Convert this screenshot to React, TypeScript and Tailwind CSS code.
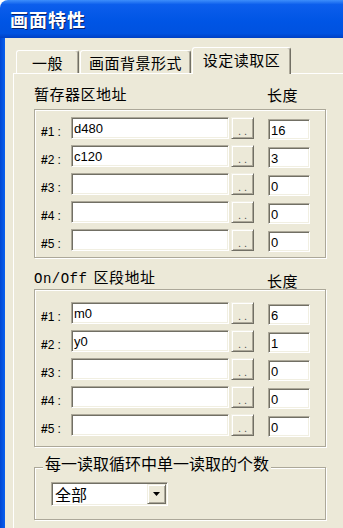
import React from "react";

const cjk = "font-['Noto_Sans_CJK_SC','Noto_Sans',sans-serif]";
const latin = "font-['Liberation_Sans','Noto_Sans_CJK_SC',sans-serif]";

const sunken =
  "border border-t-[#ACA899] border-l-[#ACA899] border-b-white border-r-white bg-white shadow-[inset_1px_1px_0_#716F64,inset_-1px_-1px_0_#F1EFE2]";
const raised =
  "border border-t-[#F1EFE2] border-l-[#F1EFE2] border-b-[#716F64] border-r-[#716F64] bg-[#ECE9D8] shadow-[inset_1px_1px_0_#fff,inset_-1px_-1px_0_#ACA899]";
const etched = "border border-[#ACA899] shadow-[inset_1px_1px_0_#fff,1px_1px_0_#fff]";

interface RowData {
  addr: string;
  len: string;
}

const registerRows: RowData[] = [
  { addr: "d480", len: "16" },
  { addr: "c120", len: "3" },
  { addr: "", len: "0" },
  { addr: "", len: "0" },
  { addr: "", len: "0" },
];

const bitRows: RowData[] = [
  { addr: "m0", len: "6" },
  { addr: "y0", len: "1" },
  { addr: "", len: "0" },
  { addr: "", len: "0" },
  { addr: "", len: "0" },
];

const AddressRow: React.FC<{ index: number; row: RowData }> = ({ index, row }) => (
  <div className="flex h-[22px] items-start">
    <span className={`${latin} w-[30px] self-end text-[12px] leading-[14px] text-black`}>
      <span className="font-bold">#</span>
      {index}
      <span className="ml-[3px]">:</span>
    </span>
    <div className={`${sunken} ${latin} flex h-[22px] w-[158px] items-center pl-[2px] text-[13px] leading-none text-black`}>
      {row.addr}
    </div>
    <div className={`${raised} ml-[2px] flex h-[22px] w-[23px] items-end justify-center pb-[3px] text-[11px] leading-[8px] tracking-[3px] text-[#555] ${latin}`}>
      <span className="pl-[3px]">..</span>
    </div>
    <div className={`${sunken} ${latin} ml-[14px] mt-[2px] flex h-[21px] w-[42px] items-center pl-[2px] pt-[2px] text-[13px] leading-none text-black`}>
      {row.len}
    </div>
  </div>
);

const AddressBox: React.FC<{ rows: RowData[]; className: string }> = ({ rows, className }) => (
  <div className={`${etched} flex w-[292px] flex-col gap-[6px] pl-[6px] ${className}`}>
    {rows.map((row, i) => (
      <AddressRow key={i} index={i + 1} row={row} />
    ))}
  </div>
);

const Tab: React.FC<{ label: string; selected?: boolean; className: string }> = ({
  label,
  selected = false,
  className,
}) => (
  <div
    className={`${cjk} flex items-center justify-center rounded-t-[3px] border-l border-t border-r border-l-white border-t-white border-r-[#716F64] bg-[#ECE9D8] text-[15px] leading-none tracking-[0.5px] text-black shadow-[inset_-1px_0_0_#ACA899] ${
      selected ? "relative z-10 -mb-[1px] h-[27px] pb-[3px]" : "h-[23px]"
    } ${className}`}
  >
    {label}
  </div>
);

const App: React.FC = () => {
  return (
    <div className="h-[528px] w-[343px] overflow-hidden bg-white">
      <div className="flex h-full flex-col overflow-hidden rounded-tl-[8px]">
        {/* title bar */}
        <div className="flex h-[38px] shrink-0 items-center bg-[linear-gradient(180deg,#3D8EFB_0%,#0C5EEC_12%,#0055E5_55%,#0052E0_88%,#0040C4_100%)] pl-[10px]">
          <span className={`${cjk} text-[18px] font-bold leading-none tracking-[1px] text-white [text-shadow:1px_1px_0_#0A246A]`}>
            画面特性
          </span>
        </div>

        <div className="flex flex-1">
          <div className="w-[5px] bg-[linear-gradient(90deg,#0046D2,#0860F0)]" />
          <div className="flex flex-1 flex-col bg-[#ECE9D8] pl-[8px] pt-[9px]">
            {/* tabs */}
            <div className="ml-[3px] flex h-[26px] items-end">
              <Tab label="一般" className="w-[63px]" />
              <Tab label="画面背景形式" className="ml-[1px] w-[111px]" />
              <Tab label="设定读取区" selected className="ml-[1px] w-[99px]" />
            </div>

            {/* tab panel */}
            <div className="flex flex-1 flex-col border-l border-t border-white pl-[20px]">
              <div className={`${cjk} flex h-[35px] w-[292px] items-start text-[15px] leading-[16px] tracking-[0.5px] text-black`}>
                <span className="mt-[12px] w-[233px]">暂存器区地址</span>
                <span className="mt-[13px]">长度</span>
              </div>
              <AddressBox rows={registerRows} className="h-[149px] pt-[7px]" />

              <div className={`${cjk} flex h-[31px] w-[292px] items-start text-[15px] leading-[16px] tracking-[0.5px] text-black`}>
                <span className="mt-[11px] w-[233px]">
                  <span className="font-['Liberation_Mono',monospace] text-[14px] tracking-[0.5px]">On/Off</span>
                  <span className="ml-[6px]">区段地址</span>
                </span>
                <span className="mt-[15px]">长度</span>
              </div>
              <AddressBox rows={bitRows} className="h-[158px] pt-[12px]" />

              <fieldset className={`${etched} mt-[8px] w-[292px] pb-[13px]`}>
                <legend className={`${cjk} ml-[8px] bg-[#ECE9D8] px-[2px] pb-[8px] text-[16px] leading-[16px] text-black`}>
                  每一读取循环中单一读取的个数
                </legend>
                <div className={`${sunken} ml-[16px] mt-[3px] flex h-[24px] w-[117px] items-center p-[1px]`}>
                  <span className={`${cjk} pl-[2px] text-[16px] leading-none text-black`}>全部</span>
                  <div className={`${raised} ml-auto flex h-[20px] w-[19px] items-center justify-center`}>
                    <svg width="7" height="4" viewBox="0 0 7 4">
                      <polygon points="0,0 7,0 3.5,4" fill="#000" />
                    </svg>
                  </div>
                </div>
              </fieldset>
            </div>
          </div>
        </div>
      </div>
    </div>
  );
};

export default App;
